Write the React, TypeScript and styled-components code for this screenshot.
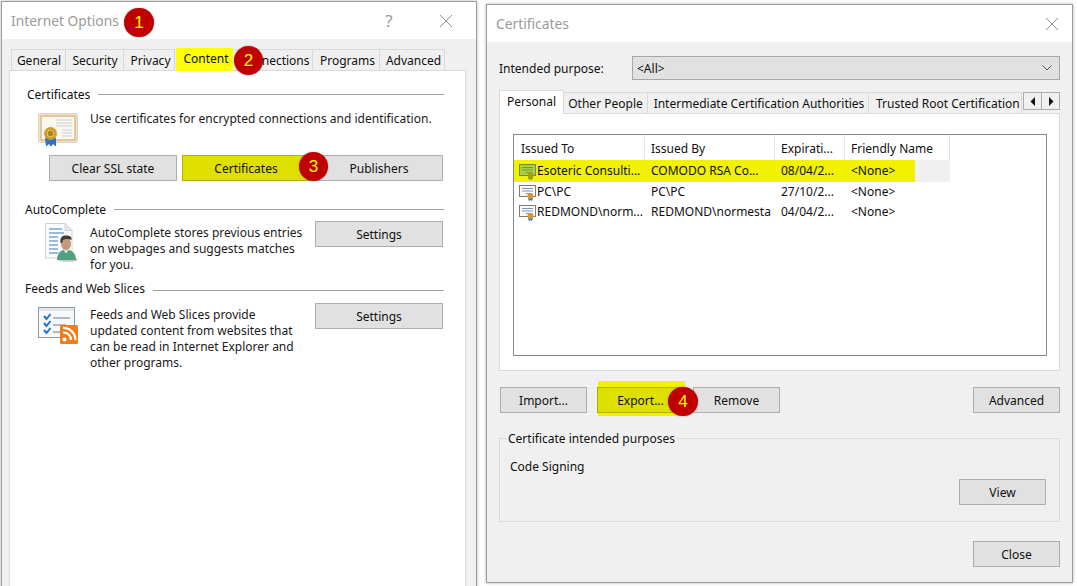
import React from "react";
import styled, { createGlobalStyle, css } from "styled-components";

const Global = createGlobalStyle`
  html, body { margin: 0; padding: 0; background: #fff; }
  body { width: 1077px; height: 586px; overflow: hidden; }
  * { box-sizing: border-box; }
`;

const Page = styled.div`
  position: relative;
  width: 1077px;
  height: 586px;
  overflow: hidden;
  display: flex;
  align-items: flex-start;
  padding: 1px 0 0 1px;
  font: 12px/16px "Noto Sans", sans-serif;
  color: #101010;
`;

const Dialog = styled.section<{ $w: number; $h: number; $top?: number; $left?: number }>`
  flex: none;
  width: ${(p) => p.$w}px;
  height: ${(p) => p.$h}px;
  margin-top: ${(p) => p.$top ?? 0}px;
  margin-left: ${(p) => p.$left ?? 0}px;
  background: #f0f0f0;
  border: 1px solid #9c9c9c;
  box-shadow: 0 0 3px rgba(0, 0, 0, 0.3);
`;

const TitleBar = styled.header<{ $h: number; $pad: number }>`
  height: ${(p) => p.$h}px;
  background: #fff;
  display: flex;
  align-items: center;
  padding: 0 ${(p) => p.$pad}px 0 9px;
  color: #9a9a9a;
  font-size: 13.8px;
`;

const TitleText = styled.h1`
  flex: 1;
  margin: 0;
  font: inherit;
`;

const TitleIcon = styled.button<{ $gap?: number }>`
  all: unset;
  display: flex;
  align-items: center;
  justify-content: center;
  width: 16px;
  height: 16px;
  margin-left: ${(p) => p.$gap ?? 0}px;
  color: #9a9a9a;
  font-size: 17px;
`;

const TabRow = styled.nav<{ $top: number; $left: number }>`
  display: flex;
  align-items: flex-end;
  height: 24px;
  margin: ${(p) => p.$top}px 0 0 ${(p) => p.$left}px;
  position: relative;
  z-index: 1;
`;

const Tab = styled.div<{ $w: number; $active?: boolean; $marked?: boolean; $nudge?: number }>`
  flex: none;
  width: ${(p) => p.$w}px;
  height: 21px;
  margin-bottom: 1px;
  padding-left: ${(p) => p.$nudge ?? 0}px;
  background: #f0f0f0;
  border: 1px solid #d9d9d9;
  border-bottom: none;
  border-left-width: 0;
  text-align: center;
  line-height: 22px;
  white-space: nowrap;
  overflow: hidden;
  &:first-child { border-left-width: 1px; }
  ${(p) =>
    p.$active &&
    css`
      height: 24px;
      margin-bottom: 0;
      background: #fff;
      border-width: 1px 1px 0 1px;
      line-height: 22px;
    `}
  ${(p) =>
    p.$marked &&
    css`
      background: #ffff00;
      border-color: #efefef;
      line-height: 21px;
    `}
`;

const ClippedTab = styled(Tab)`
  text-align: left;
  padding-left: 7px;
`;

const LeftPanel = styled.main`
  height: 540px;
  margin: -1px 10px 0 7px;
  padding: 15px 21px 0 15px;
  background: #fff;
  border: 1px solid #d9d9d9;
`;

const Group = styled.div<{ $h: number }>`
  height: ${(p) => p.$h}px;
`;

const Heading = styled.div<{ $indent?: number; $lineShift?: number }>`
  display: flex;
  align-items: center;
  gap: 8px;
  height: 16px;
  padding-left: ${(p) => p.$indent ?? 0}px;
  white-space: nowrap;
  &::after {
    content: "";
    flex: 1;
    height: 1px;
    background: #a0a0a0;
    position: relative;
    top: ${(p) => p.$lineShift ?? 0}px;
  }
`;

const Label = styled.span`
  display: block;
  padding-top: 2px;
`;

const Row = styled.div<{ $top: number }>`
  display: flex;
  align-items: flex-start;
  margin-top: ${(p) => p.$top}px;
  padding-left: 13px;
`;

const IconCell = styled.div<{ $top?: number }>`
  flex: none;
  width: 52px;
  padding-top: ${(p) => p.$top ?? 0}px;
  svg { display: block; }
`;

const Description = styled.p<{ $w: number; $top: number; $end?: number }>`
  flex: none;
  width: ${(p) => p.$w}px;
  margin: 0;
  padding-top: ${(p) => p.$top}px;
  padding-right: ${(p) => p.$end ?? 0}px;
  color: #1a1a1a;
`;

const Button = styled.button<{ $w?: number; $marked?: boolean }>`
  flex: none;
  width: ${(p) => p.$w ?? 87}px;
  height: 26px;
  padding: 1px 0 0;
  background: ${(p) => (p.$marked ? "#e0e000" : "#e1e1e1")};
  border: 1px solid ${(p) => (p.$marked ? "#b0b000" : "#adadad")};
  font: inherit;
  color: #101010;
  position: relative;
`;

const CertButtons = styled.div`
  display: flex;
  gap: 5px;
  margin: 8px 0 0 24px;
`;

const RightBody = styled.div`
  padding: 14px 12px 0 12px;
`;

const PurposeRow = styled.div`
  display: flex;
  align-items: center;
  height: 24px;
`;

const PurposeLabel = styled.label`
  width: 133px;
  flex: none;
`;

const Combo = styled.div`
  flex: 1;
  height: 24px;
  display: flex;
  align-items: center;
  justify-content: space-between;
  padding: 0 6px 0 4px;
  background: #e1e1e1;
  border: 1px solid #a6a6a6;
  svg { display: block; }
`;

const TabClip = styled.div`
  display: flex;
  align-items: flex-end;
  flex: none;
`;

const ScrollButtons = styled.div`
  display: flex;
  align-self: flex-start;
  margin: 2px 0 0 1px;
`;

const ScrollButton = styled.div`
  display: flex;
  align-items: center;
  justify-content: center;
  width: 19px;
  height: 18px;
  background: #f0f0f0;
  border: 1px solid #adadad;
  & + & { margin-left: -1px; }
`;

const CertPanel = styled.div`
  height: 258px;
  margin: -1px 0 0 0;
  padding: 20px 12px 0 13px;
  background: #fff;
  border: 1px solid #d9d9d9;
`;

const CertList = styled.div`
  height: 222px;
  border: 1px solid #828790;
  background: #fff;
`;

const columns = "131px 130px 70px 105px";

const HeaderRow = styled.div`
  display: grid;
  grid-template-columns: ${columns};
  width: 436px;
  height: 25px;
`;

const HeaderCell = styled.div`
  padding: 6px 0 0 6px;
  border-right: 1px solid #e5e5e5;
  &:first-child { padding-left: 7px; }
`;

const CertRow = styled.div<{ $selected?: boolean }>`
  display: grid;
  grid-template-columns: ${columns};
  width: 436px;
  height: ${(p) => (p.$selected ? 22 : 20)}px;
  align-items: center;
  ${(p) =>
    p.$selected &&
    css`
      background: linear-gradient(to right, #f2f200 401px, #f0f0f0 401px);
    `}
`;

const Cell = styled.div`
  padding-left: 6px;
  white-space: nowrap;
  overflow: hidden;
`;

const NameCell = styled(Cell)`
  display: flex;
  align-items: center;
  padding-left: 5px;
  svg { flex: none; }
`;

const ActionRow = styled.div`
  display: flex;
  margin-top: 16px;
  padding-left: 1px;
`;

const MarkedSlot = styled.div`
  position: relative;
  margin: 0 9px 0 10px;
  &::before {
    content: "";
    position: absolute;
    left: 1px;
    top: -6px;
    width: 87px;
    height: 35px;
    background: #f1f100;
  }
`;

const Spacer = styled.div`
  flex: 1;
`;

const Purposes = styled.fieldset`
  height: 93px;
  margin: 16px 0 0 0;
  padding: 12px 13px 0 10px;
  border: 1px solid #dcdcdc;
  display: block;
  min-width: 0;
`;

const PurposesLegend = styled.legend`
  margin-left: -3px;
  padding: 2px 1px 0;
  line-height: 16px;
`;

const PurposeText = styled.div`
  height: 20px;
`;

const EndRow = styled.div<{ $top?: number }>`
  display: flex;
  justify-content: flex-end;
  margin-top: ${(p) => p.$top ?? 0}px;
`;

const Badge = styled.div<{ $x: number; $y: number }>`
  position: absolute;
  left: ${(p) => p.$x - 14.75}px;
  top: ${(p) => p.$y - 14.75}px;
  width: 29.5px;
  height: 29.5px;
  border-radius: 50%;
  background: #c00000;
  color: #ffff00;
  display: flex;
  align-items: center;
  justify-content: center;
  font: 17px/1 "Liberation Sans", sans-serif;
  box-shadow: 0 0 2px rgba(0, 0, 0, 0.35);
  z-index: 5;
`;

const CloseIcon = () => (
  <svg width="16" height="16" viewBox="0 0 16 16" fill="none" stroke="#8e8e8e" strokeWidth="1">
    <path d="M2 2 14 14M14 2 2 14" />
  </svg>
);

const CertificateIcon = () => (
  <svg width="40" height="34" viewBox="0 0 40 34">
    <rect x="0.5" y="0.5" width="39" height="29" rx="1" fill="#efe3cf" stroke="#d9d4cb" />
    <rect x="3" y="3" width="34" height="24" fill="#fbf8f2" stroke="#e0b77f" strokeWidth="1.4" />
    <path d="M18 7h16M18 10h16M18 13h16M24 17h10M24 20h10M24 23h10" stroke="#dcdcdc" strokeWidth="1.4" />
    <path d="M7 25l1 8.500 3-2.500 2 2.500L14 25z" fill="#2f73c4" />
    <path d="M12 25l1 8.500 2-2.500 3 2.500L18 25z" fill="#2f73c4" />
    <circle cx="12.500" cy="20.500" r="6.500" fill="#cf9c25" />
    <circle cx="12.500" cy="20.500" r="3.400" fill="#a9842c" stroke="#eccb66" />
  </svg>
);

const AutoCompleteIcon = () => (
  <svg width="40" height="42" viewBox="0 0 40 42">
    <path d="M7.500 2.500H27l7 7V37H7.500z" fill="#fafbfd" stroke="#cfd3d8" />
    <path d="M27 2.500v7h7z" fill="#e5e7ea" stroke="#cfd3d8" />
    <path d="M11 8h13M11 12h15M11 16h9M11 20h9M11 24h9M11 28h9M11 32h9" stroke="#7da4cf" strokeWidth="1.500" />
    <ellipse cx="30" cy="39" rx="10" ry="1.800" fill="#c9c9c9" />
    <path d="M19 39c0-6 3-9 6-10h6c4 1 7 4 7 10z" fill="#4fa17f" />
    <path d="M25.500 29l2.500 3.500 2.500-3.500z" fill="#dff0e8" />
    <ellipse cx="28" cy="23" rx="5" ry="6.200" fill="#c49a78" />
    <path d="M22.500 22c-.8-6 2-7.500 5.500-7.500s6 1 5.500 4.500c-2.500-1.500-6.500-1.500-8.500 0l-1 3z" fill="#3e3a36" />
  </svg>
);

const FeedsIcon = () => (
  <svg width="40" height="38" viewBox="0 0 40 38">
    <rect x="0.500" y="0.500" width="36" height="30" fill="#f7f9fc" stroke="#8f979f" />
    <rect x="1" y="1" width="35" height="3" fill="#e2e5e9" />
    <path d="M15 11h17M15 18h13M15 25h8" stroke="#9aa3ad" strokeWidth="1.400" />
    <path d="M6 9l2.500 3 4-5M6 16l2.500 3 4-5M6 23l2.500 3 4-5" fill="none" stroke="#1c76c9" strokeWidth="2" />
    <rect x="22" y="18" width="18" height="19" rx="1.500" fill="#ef7d1a" />
    <circle cx="26.500" cy="32.500" r="2" fill="#fff" />
    <path d="M25 25.500a7.500 7.500 0 0 1 8 7.500M25 20.800a12 12 0 0 1 12.400 12.200" fill="none" stroke="#fff" strokeWidth="2.200" />
  </svg>
);

const SmallCert = ({ green }: { green?: boolean }) => (
  <svg width="18" height="17" viewBox="0 0 18 17">
    <rect x="0.500" y="1.500" width="16" height="11" fill={green ? "#a9cf45" : "#fafafa"} stroke={green ? "#77893a" : "#8a7868"} />
    <path d="M3 4.500h11M3 7h11M7 9.500h6" stroke={green ? "#6f9c35" : "#7e93b8"} />
    <path d="M9 14l1 3 1.500-1 1.500 1 1-3z" fill={green ? "#7f9a20" : "#2f73c4"} />
    <circle cx="11.500" cy="12" r="3" fill={green ? "#aa9a1c" : "#d8972a"} />
  </svg>
);

const Chevron = () => (
  <svg width="12" height="8" viewBox="0 0 12 8" fill="none" stroke="#555" strokeWidth="1">
    <path d="M1.500 1.500 6 6l4.500-4.500" />
  </svg>
);

const Arrow = ({ dir }: { dir: "left" | "right" }) => (
  <svg width="6" height="9" viewBox="0 0 6 9">
    <path d={dir === "left" ? "M5 0v9L0.500 4.500z" : "M1 0v9l4.500-4.500z"} fill="#111" />
  </svg>
);

const leftTabs: [string, number, boolean?][] = [
  ["General", 55],
  ["Security", 58],
  ["Privacy", 51],
  ["Content", 59, true],
  ["Connections", 79],
  ["Programs", 67],
  ["Advanced", 65],
];

const certs = [
  { to: "Esoteric Consulti...", by: "COMODO RSA Co...", exp: "08/04/2...", selected: true },
  { to: "PC\\PC", by: "PC\\PC", exp: "27/10/2..." },
  { to: "REDMOND\\norm...", by: "REDMOND\\normesta", exp: "04/04/2..." },
];

export default function App() {
  return (
    <Page>
      <Global />
      <Dialog $w={476} $h={600}>
        <TitleBar $h={37} $pad={22}>
          <TitleText>Internet Options</TitleText>
          <TitleIcon>?</TitleIcon>
          <TitleIcon $gap={41}>
            <CloseIcon />
          </TitleIcon>
        </TitleBar>
        <TabRow $top={8} $left={9}>
          {leftTabs.map(([label, w, active]) => (
            <Tab key={label} $w={w} $active={active} $marked={active} $nudge={label === "General" || label === "Security" ? 1 : 3}>
              {label}
            </Tab>
          ))}
        </TabRow>
        <LeftPanel>
          <Group $h={115}>
            <Heading $indent={2}>
              <Label>Certificates</Label>
            </Heading>
            <Row $top={8}>
              <IconCell $top={3}>
                <CertificateIcon />
              </IconCell>
              <Description $w={350} $top={1}>
                Use certificates for encrypted connections and identification.
              </Description>
            </Row>
            <CertButtons>
              <Button $w={128}>Clear SSL state</Button>
              <Button $w={128} $marked>
                Certificates
              </Button>
              <Button $w={128}>Publishers</Button>
            </CertButtons>
          </Group>
          <Group $h={79}>
            <Heading>
              <Label>AutoComplete</Label>
            </Heading>
            <Row $top={4}>
              <IconCell>
                <AutoCompleteIcon />
              </IconCell>
              <Description $w={225} $top={4} $end={5}>
                AutoComplete stores previous entries on webpages and suggests matches for you.
              </Description>
              <Button $w={128}>Settings</Button>
            </Row>
          </Group>
          <Group $h={100}>
            <Heading $lineShift={2}>
              <Label>Feeds and Web Slices</Label>
            </Heading>
            <Row $top={7}>
              <IconCell $top={4}>
                <FeedsIcon />
              </IconCell>
              <Description $w={225} $top={4} $end={12}>
                Feeds and Web Slices provide updated content from websites that can be read in Internet Explorer and other programs.
              </Description>
              <Button $w={128}>Settings</Button>
            </Row>
          </Group>
        </LeftPanel>
      </Dialog>

      <Dialog $w={587} $h={579} $top={3} $left={9}>
        <TitleBar $h={37} $pad={12}>
          <TitleText>Certificates</TitleText>
          <TitleIcon>
            <CloseIcon />
          </TitleIcon>
        </TitleBar>
        <RightBody>
          <PurposeRow>
            <PurposeLabel>
              <Label>Intended purpose:</Label>
            </PurposeLabel>
            <Combo>
              <Label>&lt;All&gt;</Label>
              <Chevron />
            </Combo>
          </PurposeRow>
          <TabRow $top={10} $left={0}>
            <TabClip>
              <Tab $w={65} $active>
                Personal
              </Tab>
              <Tab $w={84}>Other People</Tab>
              <Tab $w={221} $nudge={2}>Intermediate Certification Authorities</Tab>
              <ClippedTab $w={153}>Trusted Root Certification</ClippedTab>
            </TabClip>
            <ScrollButtons>
              <ScrollButton>
                <Arrow dir="left" />
              </ScrollButton>
              <ScrollButton>
                <Arrow dir="right" />
              </ScrollButton>
            </ScrollButtons>
          </TabRow>
          <CertPanel>
            <CertList>
              <HeaderRow>
                <HeaderCell>Issued To</HeaderCell>
                <HeaderCell>Issued By</HeaderCell>
                <HeaderCell>Expirati...</HeaderCell>
                <HeaderCell>Friendly Name</HeaderCell>
              </HeaderRow>
              {certs.map((c) => (
                <CertRow key={c.to} $selected={c.selected}>
                  <NameCell>
                    <SmallCert green={c.selected} />
                    {c.to}
                  </NameCell>
                  <Cell>{c.by}</Cell>
                  <Cell>{c.exp}</Cell>
                  <Cell>&lt;None&gt;</Cell>
                </CertRow>
              ))}
            </CertList>
          </CertPanel>
          <ActionRow>
            <Button>Import...</Button>
            <MarkedSlot>
              <Button $marked>Export...</Button>
            </MarkedSlot>
            <Button>Remove</Button>
            <Spacer />
            <Button>Advanced</Button>
          </ActionRow>
          <Purposes>
            <PurposesLegend>Certificate intended purposes</PurposesLegend>
            <PurposeText>Code Signing</PurposeText>
            <EndRow>
              <Button>View</Button>
            </EndRow>
          </Purposes>
          <EndRow $top={19}>
            <Button>Close</Button>
          </EndRow>
        </RightBody>
      </Dialog>

      <Badge $x={139} $y={22.5}>1</Badge>
      <Badge $x={248.5} $y={60.5}>2</Badge>
      <Badge $x={313.5} $y={166.5}>3</Badge>
      <Badge $x={683} $y={401.5}>4</Badge>
    </Page>
  );
}
